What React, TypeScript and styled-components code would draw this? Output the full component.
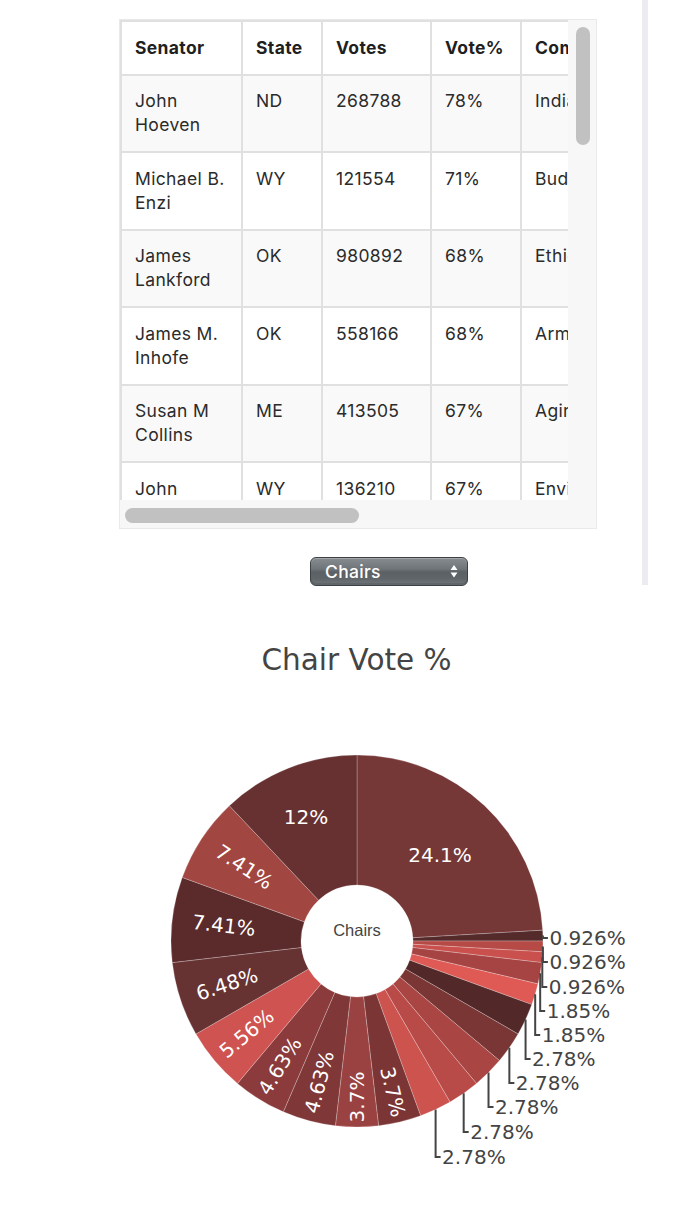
import React from "react";
import styled, { createGlobalStyle } from "styled-components";

const GlobalStyle = createGlobalStyle`
  html, body { margin: 0; padding: 0; background: #ffffff; }
  body { font-family: Inter, "Liberation Sans", sans-serif; color: #222222; }
  * { box-sizing: border-box; }
`;

const Page = styled.div`
  width: 673px;
  overflow: hidden;
`;

const TopSection = styled.div`
  display: flex;
  height: 586px;
`;

const MainColumn = styled.div`
  width: 642px;
  padding: 19px 0 0 119px;
  display: flex;
  flex-direction: column;
  align-items: flex-start;
`;

const SideRule = styled.div`
  width: 6px;
  height: 585px;
  background: #ebebf0;
`;

const ScrollFrame = styled.div`
  width: 478px;
  height: 510px;
  display: grid;
  grid-template-columns: 448px 28px;
  grid-template-rows: 480px 28px;
  border: 1px solid #e9e9e9;
  background: #f7f7f7;
`;

const Viewport = styled.div`
  overflow: hidden;
  background: #ffffff;
`;

const VTrack = styled.div`
  padding: 7px 0 0 8px;
  display: flex;
  flex-direction: column;
`;

const HTrack = styled.div`
  padding: 8px 0 0 5px;
  display: flex;
`;

const Thumb = styled.div<{ $w: number; $h: number }>`
  width: ${(p) => p.$w}px;
  height: ${(p) => p.$h}px;
  border-radius: 8px;
  background: #c1c1c1;
`;

const Table = styled.table`
  width: 809px;
  table-layout: fixed;
  border-collapse: separate;
  border-spacing: 0;
  background: #ffffff;
  border-top: 2px solid #e0e0e0;
  border-left: 2px solid #e0e0e0;
  font-size: 17.5px;
  letter-spacing: 0.35px;
  line-height: 24px;
  color: #2b2b2b;
`;

const HeadCell = styled.th<{ $w: number }>`
  width: ${(p) => p.$w}px;
  text-align: left;
  font-weight: 700;
  color: #1f1f1f;
  padding: 13.75px 13px;
  border-right: 2px solid #e0e0e0;
  border-bottom: 2px solid #e0e0e0;
  white-space: nowrap;
  overflow: hidden;
`;

const Row = styled.tr`
  &:nth-child(odd) { background: #f9f9f9; }
`;

const Cell = styled.td`
  vertical-align: top;
  padding: 13.75px 13px;
  border-right: 2px solid #e0e0e0;
  border-bottom: 2px solid #e0e0e0;
  height: 77.5px;
`;

const SelectBox = styled.div`
  margin: 28px 0 0 191px;
  width: 158px;
  height: 29px;
  border-radius: 6px;
  border: 1px solid #3c4144;
  background: linear-gradient(#878c90 0%, #70757a 40%, #5c6165 52%, #5f6468 75%, #72777b 100%);
  box-shadow: inset 0 1px 0 rgba(255, 255, 255, 0.25), inset 0 -2px 0 rgba(0, 0, 0, 0.12);
  display: flex;
  align-items: center;
  justify-content: space-between;
  padding: 0 9px 0 14px;
  color: #ffffff;
  font-size: 17.5px;
  letter-spacing: 0.3px;
  font-weight: 500;
`;

const ChartSection = styled.section`
  display: flex;
  flex-direction: column;
`;

const ChartTitle = styled.div`
  margin-top: 60px;
  padding-left: 40px;
  height: 29px;
  font-family: "DejaVu Sans", Verdana, sans-serif;
  font-size: 29.5px;
  line-height: 29px;
  color: #444444;
  text-align: center;
`;

const PieSvg = styled.svg`
  display: block;
  margin-top: 25px;
`;

type Senator = [string, string, string, string, string, string];

const rows: Senator[] = [
  ["John Hoeven", "ND", "268788", "78%", "Indian Affairs", "Republican"],
  ["Michael B. Enzi", "WY", "121554", "71%", "Budget", "Republican"],
  ["James Lankford", "OK", "980892", "68%", "Ethics", "Republican"],
  ["James M. Inhofe", "OK", "558166", "68%", "Armed Services", "Republican"],
  ["Susan M Collins", "ME", "413505", "67%", "Aging", "Republican"],
  ["John Barrasso", "WY", "136210", "67%", "Environment and Public Works", "Republican"],
  ["Richard C. Shelby", "AL", "748709", "64%", "Appropriations", "Republican"],
  ["Lisa Murkowski", "AK", "138149", "62%", "Energy and Natural Resources", "Republican"],
  ["Mike Crapo", "ID", "449017", "61%", "Banking", "Republican"],
  ["Johnny Isakson", "GA", "1358088", "61%", "Veterans' Affairs", "Republican"],
];

const headers: [string, number][] = [
  ["Senator", 121],
  ["State", 80],
  ["Votes", 109],
  ["Vote%", 90],
  ["Committee", 260],
  ["Party", 147],
];

type Slice = { n: number; label: string; color: string };

const slices: Slice[] = [
  { n: 26, label: "24.1%", color: "#763737" },
  { n: 1, label: "0.926%", color: "#552a2a" },
  { n: 1, label: "0.926%", color: "#b54a47" },
  { n: 1, label: "0.926%", color: "#c9504d" },
  { n: 2, label: "1.85%", color: "#a54442" },
  { n: 2, label: "1.85%", color: "#e05a55" },
  { n: 3, label: "2.78%", color: "#522828" },
  { n: 3, label: "2.78%", color: "#7a3535" },
  { n: 3, label: "2.78%", color: "#a94644" },
  { n: 3, label: "2.78%", color: "#b84a48" },
  { n: 3, label: "2.78%", color: "#cd534f" },
  { n: 4, label: "3.7%", color: "#7c3535" },
  { n: 4, label: "3.7%", color: "#9a4241" },
  { n: 5, label: "4.63%", color: "#7f3737" },
  { n: 5, label: "4.63%", color: "#8b3b3b" },
  { n: 6, label: "5.56%", color: "#cf5350" },
  { n: 7, label: "6.48%", color: "#673232" },
  { n: 8, label: "7.41%", color: "#5b2a2b" },
  { n: 8, label: "7.41%", color: "#a14641" },
  { n: 13, label: "12%", color: "#673131" },
];

const CX = 357;
const CY = 241;
const R = 186;
const HOLE = 56;

const pt = (deg: number, r: number): [number, number] => {
  const a = (deg * Math.PI) / 180;
  return [CX + r * Math.sin(a), CY - r * Math.cos(a)];
};

const radialR: Record<number, number> = {
  11: 155, 12: 156, 13: 146, 14: 147, 15: 144, 16: 137, 17: 134, 18: 135,
};
const horiz: Record<number, [number, number]> = {
  0: [440, 155],
  19: [306, 117],
};
const outsideY: Record<number, number> = {
  1: 238, 2: 262, 3: 287, 4: 311, 5: 335, 6: 359, 7: 383, 8: 407, 9: 432, 10: 457,
};

const LABEL_FONT = "'DejaVu Sans', Verdana, sans-serif";

function PieChart() {
  let acc = 0;
  const parts = slices.map((s, i) => {
    const a0 = (acc / 108) * 360;
    acc += s.n;
    const a1 = (acc / 108) * 360;
    const large = a1 - a0 > 180 ? 1 : 0;
    const [ox0, oy0] = pt(a0, R);
    const [ox1, oy1] = pt(a1, R);
    const [ix1, iy1] = pt(a1, HOLE);
    const [ix0, iy0] = pt(a0, HOLE);
    const d = `M${ox0},${oy0} A${R},${R} 0 ${large} 1 ${ox1},${oy1} L${ix1},${iy1} A${HOLE},${HOLE} 0 ${large} 0 ${ix0},${iy0} Z`;
    return { ...s, i, a0, a1, mid: (a0 + a1) / 2, d };
  });

  return (
    <PieSvg width={673} height={523} viewBox="0 0 673 523">
      {parts.map((p) => (
        <path key={`s${p.i}`} d={p.d} fill={p.color} stroke="rgba(255,255,255,0.35)" strokeWidth={0.7} />
      ))}
      {parts.map((p) => {
        if (horiz[p.i]) {
          const [x, y] = horiz[p.i];
          return (
            <text key={`t${p.i}`} x={x} y={y} fill="#fff" fontFamily={LABEL_FONT} fontSize={20} textAnchor="middle" dominantBaseline="central">
              {p.label}
            </text>
          );
        }
        if (radialR[p.i]) {
          const [x, y] = pt(p.mid, radialR[p.i]);
          const rot = p.mid < 180 ? p.mid - 90 : p.mid - 270;
          return (
            <text key={`t${p.i}`} x={x} y={y} fill="#fff" fontFamily={LABEL_FONT} fontSize={20} textAnchor="middle" dominantBaseline="central" transform={`rotate(${rot} ${x} ${y})`}>
              {p.label}
            </text>
          );
        }
        if (outsideY[p.i] !== undefined) {
          const [x, y] = pt(p.mid, R);
          const ly = outsideY[p.i];
          return (
            <g key={`t${p.i}`}>
              <path d={`M${x},${y} V${ly} H${x + 5}`} fill="none" stroke="#444" strokeWidth={2} />
              <text x={x + 6.5} y={ly} fill="#444" fontFamily={LABEL_FONT} fontSize={20} dominantBaseline="central">
                {p.label}
              </text>
            </g>
          );
        }
        return null;
      })}
      <text x={CX} y={230} fill="#444" fontFamily="'Liberation Sans', Arial, sans-serif" fontSize={16.5} textAnchor="middle" dominantBaseline="central">
        Chairs
      </text>
    </PieSvg>
  );
}

export default function App() {
  return (
    <Page>
      <GlobalStyle />
      <TopSection>
        <MainColumn>
          <ScrollFrame>
            <Viewport>
              <Table>
                <thead>
                  <tr>
                    {headers.map(([h, w]) => (
                      <HeadCell key={h} $w={w}>{h}</HeadCell>
                    ))}
                  </tr>
                </thead>
                <tbody>
                  {rows.map((r) => (
                    <Row key={r[0]}>
                      {r.map((c, j) => (
                        <Cell key={j}>{c}</Cell>
                      ))}
                    </Row>
                  ))}
                </tbody>
              </Table>
            </Viewport>
            <VTrack>
              <Thumb $w={14} $h={118} />
            </VTrack>
            <HTrack>
              <Thumb $w={234} $h={15} />
            </HTrack>
          </ScrollFrame>
          <SelectBox>
            <span>Chairs</span>
            <svg width="8" height="13" viewBox="0 0 8 13">
              <path d="M4 0 L7.5 5 H0.5 Z M0.5 7.5 H7.5 L4 12.5 Z" fill="#ffffff" />
            </svg>
          </SelectBox>
        </MainColumn>
        <SideRule />
      </TopSection>
      <ChartSection>
        <ChartTitle>Chair Vote %</ChartTitle>
        <PieChart />
      </ChartSection>
    </Page>
  );
}
